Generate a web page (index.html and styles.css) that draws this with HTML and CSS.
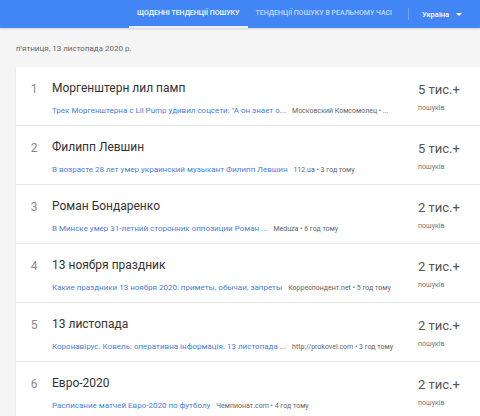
FILE: index.html
```html
<!DOCTYPE html>
<html lang="uk">
<head>
    <meta charset="UTF-8">
    <title>Тенденції пошуку</title>
    <link rel="stylesheet" href="styles.css">
</head>
<body>

<div class="header">
    <div class="tab active">Щоденні тенденції пошуку</div>
    <div class="tab">Тенденції пошуку в реальному часі</div>
    <div class="divider"></div>
    <div class="country">Україна <span class="arrow"></span></div>
</div>

<div class="page">
    <div class="date">п'ятниця, 13 листопада 2020 р.</div>

    <div class="card">
        <div class="row">
            <div class="num">1</div>
            <div class="main">
                <div class="title">Моргенштерн лил памп</div>
                <div class="sub"><span class="link">Трек Моргенштерна с Lil Pump удивил соцсети: "А он знает о...</span> <span class="source">Московский Комсомолец • ...</span></div>
            </div>
            <div class="count">
                <div class="value">5 тис.+</div>
                <div class="label">пошуків</div>
            </div>
        </div>
        <div class="row">
            <div class="num">2</div>
            <div class="main">
                <div class="title">Филипп Левшин</div>
                <div class="sub"><span class="link">В возрасте 28 лет умер украинский музыкант Филипп Левшин</span> <span class="source">112.ua • 3 год тому</span></div>
            </div>
            <div class="count">
                <div class="value">5 тис.+</div>
                <div class="label">пошуків</div>
            </div>
        </div>
        <div class="row">
            <div class="num">3</div>
            <div class="main">
                <div class="title">Роман Бондаренко</div>
                <div class="sub"><span class="link">В Минске умер 31-летний сторонник оппозиции Роман ...</span> <span class="source">Meduza • 6 год тому</span></div>
            </div>
            <div class="count">
                <div class="value">2 тис.+</div>
                <div class="label">пошуків</div>
            </div>
        </div>
        <div class="row">
            <div class="num">4</div>
            <div class="main">
                <div class="title">13 ноября праздник</div>
                <div class="sub"><span class="link">Какие праздники 13 ноября 2020: приметы, обычаи, запреты</span> <span class="source">Корреспондент.net • 5 год тому</span></div>
            </div>
            <div class="count">
                <div class="value">2 тис.+</div>
                <div class="label">пошуків</div>
            </div>
        </div>
        <div class="row">
            <div class="num">5</div>
            <div class="main">
                <div class="title">13 листопада</div>
                <div class="sub"><span class="link">Коронавірус. Ковель: оперативна інформація. 13 листопада ...</span> <span class="source">http://prokovel.com • 3 год тому</span></div>
            </div>
            <div class="count">
                <div class="value">2 тис.+</div>
                <div class="label">пошуків</div>
            </div>
        </div>
        <div class="row">
            <div class="num">6</div>
            <div class="main">
                <div class="title">Евро-2020</div>
                <div class="sub"><span class="link">Расписание матчей Евро-2020 по футболу</span> <span class="source">Чемпионат.com • 4 год тому</span></div>
            </div>
            <div class="count">
                <div class="value">2 тис.+</div>
                <div class="label">пошуків</div>
            </div>
        </div>
    </div>
</div>

</body>
</html>
```

FILE: styles.css
```css
html, body {
    overflow: hidden;
}
body {
    margin: 0;
    font-family: Roboto, "Noto Sans", sans-serif;
    background-color: #f5f5f5;
    color: #333;
}
.header {
    display: flex;
    align-items: stretch;
    height: 28px;
    padding-left: 129px;
    background-color: #4285f4;
    box-shadow: 0 1px 2px rgba(0, 0, 0, 0.15);
}
.tab {
    display: flex;
    align-items: center;
    padding: 0 8px;
    font-size: 7px;
    font-weight: 500;
    text-transform: uppercase;
    color: rgba(255, 255, 255, 0.7);
    border-bottom: 2px solid transparent;
    box-sizing: border-box;
    white-space: nowrap;
}
.tab.active {
    color: #fff;
    border-bottom-color: rgba(255, 255, 255, 0.9);
}
.divider {
    width: 1px;
    margin: 8px 8px;
    background: rgba(255, 255, 255, 0.25);
}
.country {
    display: flex;
    align-items: center;
    margin-left: 5px;
    font-size: 7.5px;
    font-weight: 500;
    color: #fff;
}
.arrow {
    margin-left: 7px;
    border-left: 3px solid transparent;
    border-right: 3px solid transparent;
    border-top: 3px solid #fff;
}
.page {
    padding: 0 0 0 16px;
}
.date {
    padding: 16px 0 13px;
    font-size: 8px;
    line-height: 10px;
    color: #666;
}
.card {
    background: #fff;
    box-shadow: 0 1px 2px rgba(0, 0, 0, 0.12);
}
.row {
    display: flex;
    height: 58px;
    border-bottom: 1px solid #e8e8e8;
}
.num {
    width: 36px;
    padding-top: 14px;
    text-align: center;
    font-size: 12px;
    line-height: 16px;
    color: #888;
}
.main {
    width: 366px;
    padding-top: 14px;
    white-space: nowrap;
    overflow: hidden;
}
.title {
    font-size: 12px;
    line-height: 15px;
    color: #333;
}
.sub {
    margin-top: 7px;
    line-height: 10px;
}
.link {
    font-size: 8px;
    color: #4a7fd6;
}
.source {
    margin-left: 2px;
    font-size: 7px;
    color: #666;
}
.count {
    padding-top: 14px;
}
.value {
    font-size: 13px;
    line-height: 18px;
    color: #555;
}
.label {
    margin-top: 4px;
    font-size: 7px;
    line-height: 10px;
    color: #777;
}
```
